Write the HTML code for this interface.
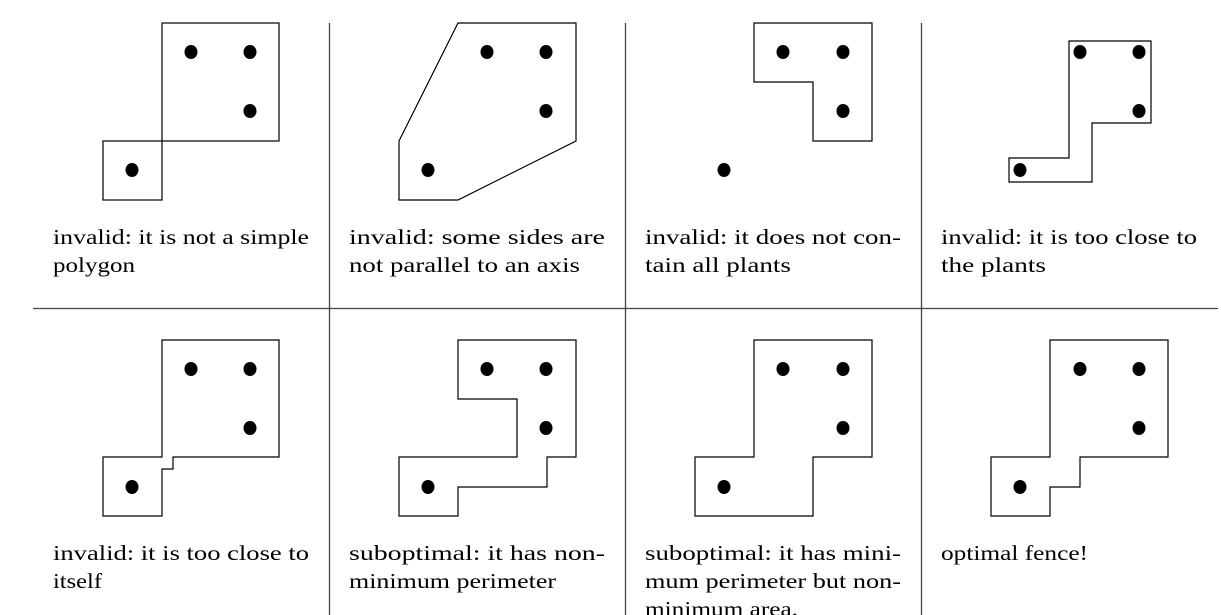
<!DOCTYPE html>
<html><head><meta charset="utf-8"><style>
html,body{margin:0;padding:0;background:#fff;width:1221px;height:615px;overflow:hidden}
text{font-family:"Liberation Serif",serif;font-size:21px;fill:#000}
</style></head><body>
<svg width="1221" height="615" viewBox="0 0 1221 615" xmlns="http://www.w3.org/2000/svg">
<g stroke="#444" stroke-width="1.3" fill="none">
<line x1="329.5" y1="23" x2="329.5" y2="615"/>
<line x1="625.5" y1="23" x2="625.5" y2="615"/>
<line x1="921.5" y1="23" x2="921.5" y2="615"/>
<line x1="33" y1="308.5" x2="1218" y2="308.5"/>
</g>
<g stroke="#000" stroke-width="1.2" fill="none">
<rect x="162" y="23" width="117" height="118"/>
<rect x="103" y="141" width="59" height="59"/>
<polygon points="458,23 576,23 576,141 458,200 399,200 399,141"/>
<polygon points="754,23 872,23 872,141 813,141 813,82 754,82"/>
<polygon points="1069,41 1151,41 1151,123 1092,123 1092,182 1009,182 1009,158 1069,158"/>
<polygon points="162,340 279,340 279,457 173,457 173,469 162,469 162,516 103,516 103,457 162,457"/>
<polygon points="458,340 576,340 576,457 547,457 547,487 458,487 458,516 399,516 399,457 517,457 517,399 458,399"/>
<polygon points="754,340 872,340 872,457 813,457 813,516 695,516 695,457 754,457"/>
<polygon points="1050,340 1168,340 1168,457 1080,457 1080,487 1050,487 1050,516 991,516 991,457 1050,457"/>
</g>
<g fill="#000">
<ellipse cx="191" cy="52" rx="6.5" ry="7"/><ellipse cx="250" cy="52" rx="6.5" ry="7"/><ellipse cx="250" cy="111" rx="6.5" ry="7"/><ellipse cx="132" cy="170" rx="6.5" ry="7"/>
<ellipse cx="487" cy="52" rx="6.5" ry="7"/><ellipse cx="546" cy="52" rx="6.5" ry="7"/><ellipse cx="546" cy="111" rx="6.5" ry="7"/><ellipse cx="428" cy="170" rx="6.5" ry="7"/>
<ellipse cx="783" cy="52" rx="6.5" ry="7"/><ellipse cx="843" cy="52" rx="6.5" ry="7"/><ellipse cx="843" cy="111" rx="6.5" ry="7"/><ellipse cx="724" cy="170" rx="6.5" ry="7"/>
<ellipse cx="1080" cy="52" rx="6.5" ry="7"/><ellipse cx="1139" cy="52" rx="6.5" ry="7"/><ellipse cx="1139" cy="111" rx="6.5" ry="7"/><ellipse cx="1020" cy="170" rx="6.5" ry="7"/>
<ellipse cx="191" cy="369" rx="6.5" ry="7"/><ellipse cx="250" cy="369" rx="6.5" ry="7"/><ellipse cx="250" cy="428" rx="6.5" ry="7"/><ellipse cx="132" cy="487" rx="6.5" ry="7"/>
<ellipse cx="487" cy="369" rx="6.5" ry="7"/><ellipse cx="546" cy="369" rx="6.5" ry="7"/><ellipse cx="546" cy="428" rx="6.5" ry="7"/><ellipse cx="428" cy="487" rx="6.5" ry="7"/>
<ellipse cx="783" cy="369" rx="6.5" ry="7"/><ellipse cx="843" cy="369" rx="6.5" ry="7"/><ellipse cx="843" cy="428" rx="6.5" ry="7"/><ellipse cx="724" cy="487" rx="6.5" ry="7"/>
<ellipse cx="1080" cy="369" rx="6.5" ry="7"/><ellipse cx="1139" cy="369" rx="6.5" ry="7"/><ellipse cx="1139" cy="428" rx="6.5" ry="7"/><ellipse cx="1020" cy="487" rx="6.5" ry="7"/>
</g>
<text x="53" y="244" textLength="256" lengthAdjust="spacingAndGlyphs">invalid: it is not a simple</text>
<text x="53" y="272" textLength="82" lengthAdjust="spacingAndGlyphs">polygon</text>
<text x="349" y="244" textLength="256" lengthAdjust="spacingAndGlyphs">invalid:   some  sides  are</text>
<text x="349" y="272" textLength="231" lengthAdjust="spacingAndGlyphs">not parallel to an axis</text>
<text x="645" y="244" textLength="256" lengthAdjust="spacingAndGlyphs">invalid: it does not con-</text>
<text x="645" y="272" textLength="146" lengthAdjust="spacingAndGlyphs">tain all plants</text>
<text x="941" y="244" textLength="256" lengthAdjust="spacingAndGlyphs">invalid: it is too close to</text>
<text x="941" y="272" textLength="105" lengthAdjust="spacingAndGlyphs">the plants</text>
<text x="53" y="560" textLength="256" lengthAdjust="spacingAndGlyphs">invalid: it is too close to</text>
<text x="53" y="588" textLength="49" lengthAdjust="spacingAndGlyphs">itself</text>
<text x="349" y="560" textLength="256" lengthAdjust="spacingAndGlyphs">suboptimal: it has non-</text>
<text x="349" y="588" textLength="207" lengthAdjust="spacingAndGlyphs">minimum perimeter</text>
<text x="645" y="560" textLength="256" lengthAdjust="spacingAndGlyphs">suboptimal: it has mini-</text>
<text x="645" y="588" textLength="256" lengthAdjust="spacingAndGlyphs">mum perimeter but non-</text>
<text x="645" y="616" textLength="153" lengthAdjust="spacingAndGlyphs">minimum area.</text>
<text x="941" y="560" textLength="147" lengthAdjust="spacingAndGlyphs">optimal fence!</text>
</svg>
</body></html>
